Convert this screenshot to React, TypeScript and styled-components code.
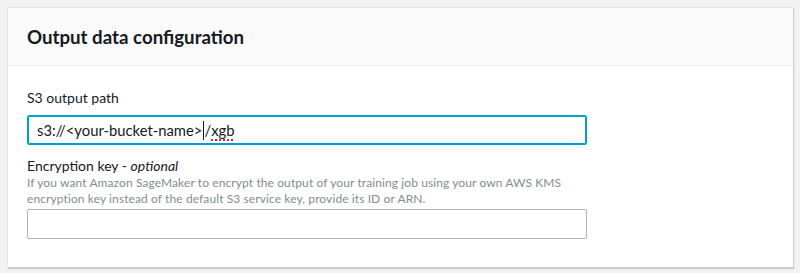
import React from "react";
import styled, { createGlobalStyle } from "styled-components";

const Global = createGlobalStyle`
  html, body { margin: 0; padding: 0; }
  body {
    background: #f2f2f2;
    font-family: Lato, "Liberation Sans", sans-serif;
    color: #16191f;
  }
`;

const Page = styled.div`
  padding: 7px 7px 0 7px;
  height: 273px;
  box-sizing: border-box;
`;

const Card = styled.section`
  width: 786px;
  box-sizing: border-box;
  background: #fff;
  border: 1px solid #e3e6e6;
  border-bottom: none;
  border-right: none;
  box-shadow: 1px 1px 0 0 #c7cfcf, 1px 2px 1px 0 rgba(0, 28, 36, 0.18);
`;

const Header = styled.header`
  height: 58px;
  box-sizing: border-box;
  background: #fafafa;
  border-bottom: 1px solid #eaeded;
  display: flex;
  align-items: center;
  padding: 0 19px;
`;

const Title = styled.h2`
  margin: 0;
  font-size: 18.7px;
  font-weight: 700;
  color: #16191f;
`;

const Body = styled.div`
  padding: 23px 19px 28px 19px;
  display: flex;
  flex-direction: column;
`;

const Field = styled.div<{ $gap?: number }>`
  display: flex;
  flex-direction: column;
  margin-top: ${(p) => p.$gap ?? 0}px;
`;

const Label = styled.label`
  font-size: 14px;
  line-height: 18px;
  color: #16191f;
  em { font-style: italic; }
`;

const Help = styled.p`
  margin: 0;
  font-size: 12px;
  letter-spacing: 0.1px;
  line-height: 16px;
  color: #7f8d8e;
`;

const Box = styled.div<{ $focused?: boolean; $mt: number }>`
  width: 560px;
  height: 30px;
  margin-top: ${(p) => p.$mt}px;
  box-sizing: border-box;
  border: 1px solid ${(p) => (p.$focused ? "#00a1c9" : "#aab7b8")};
  box-shadow: ${(p) => (p.$focused ? "inset 0 0 0 1px #00a1c9" : "none")};
  border-radius: 2px;
  display: flex;
  align-items: center;
  padding: 0 9px;
  font-size: 14.8px;
  color: #16191f;
  white-space: pre;
`;

const Caret = styled.span`
  display: inline-block;
  width: 1px;
  height: 19px;
  background: #16191f;
  margin: 0 0 0 1px;
`;

const Misspelled = styled.span`
  text-decoration: underline dotted #e0232e;
  text-decoration-thickness: 2px;
  text-underline-offset: 3px;
`;

export default function App() {
  return (
    <>
      <Global />
      <Page>
        <Card>
          <Header>
            <Title>Output data configuration</Title>
          </Header>
          <Body>
            <Field>
              <Label>S3 output path</Label>
              <Box $focused $mt={8}>
                s3://&lt;your-bucket-name&gt;
                <Caret />
                /<Misspelled>xgb</Misspelled>
              </Box>
            </Field>
            <Field $gap={12}>
              <Label>
                Encryption key - <em>optional</em>
              </Label>
              <Help>
                If you want Amazon SageMaker to encrypt the output of your training job using your own AWS KMS
                <br />
                encryption key instead of the default S3 service key, provide its ID or ARN.
              </Help>
              <Box $mt={2} />
            </Field>
          </Body>
        </Card>
      </Page>
    </>
  );
}
